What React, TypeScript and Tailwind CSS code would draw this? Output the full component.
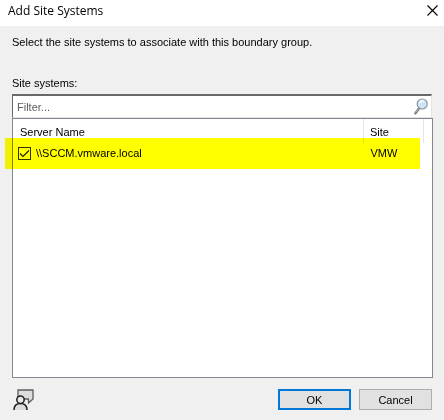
import { useState } from "react";

const servers = [{ name: "\\\\SCCM.vmware.local", site: "VMW" }];

const CloseIcon = () => (
  <svg width="11" height="11" viewBox="0 0 11 11" fill="none" stroke="black">
    <path d="M0.5 0.5 L10.5 10.5 M10.5 0.5 L0.5 10.5" strokeWidth="1.1" />
  </svg>
);

const SearchIcon = () => (
  <svg width="16" height="17" viewBox="0 0 16 17" fill="none">
    <path
      d="M6 10.5 L2.4 15.2"
      stroke="#77777b"
      strokeWidth="2.4"
      strokeLinecap="round"
    />
    <path d="M5.7 10.8 L2.6 14.6" stroke="#c9c9cc" strokeWidth="0.8" />
    <circle cx="9.2" cy="6" r="5" fill="#cfe6fa" stroke="#8e959e" strokeWidth="1.2" />
    <path
      d="M5.7 5.8 C5.9 3.6 7.4 2.4 9.4 2.3 C10.8 2.3 11.8 2.9 12.4 3.8 C10 3.8 8 4.4 5.7 5.8 Z"
      fill="#f5fbff"
    />
  </svg>
);

const FeedbackIcon = () => (
  <svg width="22" height="22" viewBox="0 0 22 22" fill="none">
    <path
      d="M5 1 H20 V10 L15.5 14 V10 H5 Z"
      fill="#dcdcdc"
      stroke="#5c5c5c"
      strokeWidth="1.3"
    />
    <path
      d="M1 21 C1 16.5 3.8 14.5 7.5 14.5 C11.2 14.5 14 16.5 14 21 Z"
      fill="#dcdcdc"
    />
    <path
      d="M1 21 C1 16.5 3.8 14.5 7.5 14.5 C11.2 14.5 14 16.5 14 21"
      stroke="#1f1f1f"
      strokeWidth="1.5"
    />
    <circle cx="7.5" cy="10.7" r="3.7" fill="#e8e8e8" stroke="#1f1f1f" strokeWidth="1.5" />
  </svg>
);

const App = () => {
  const [filter, setFilter] = useState("");
  const [checked, setChecked] = useState(true);

  return (
    <div className="min-h-screen bg-[#f0f0f0] font-['Liberation_Sans',Arial,sans-serif] text-[11px] leading-4 text-black">
      <header className="flex h-[26px] items-center justify-between bg-white pr-[6px] pb-[5px] pl-2">
        <h1 className="font-['Open_Sans','Segoe_UI',sans-serif] text-[12px]">
          Add Site Systems
        </h1>
        <button type="button" aria-label="Close">
          <CloseIcon />
        </button>
      </header>

      <main className="px-3 pt-2">
        <p>Select the site systems to associate with this boundary group.</p>
        <label htmlFor="filter" className="mt-[25px] block">
          Site systems:
        </label>

        <div className="mt-[3px] flex h-6 items-center border border-t-2 border-t-[#696969] border-r-[#e3e3e3] border-b-[#e3e3e3] border-l-[#696969] bg-white pr-[2px] pl-1">
          <input
            id="filter"
            type="text"
            placeholder="Filter..."
            value={filter}
            onChange={(e) => setFilter(e.target.value)}
            className="min-w-0 flex-1 outline-none placeholder:text-[#5f5f5f]"
          />
          <SearchIcon />
        </div>

        <div className="-mr-px h-[260px] border border-[#828790] bg-white pr-2">
          <table className="w-full table-fixed border-collapse text-left">
            <thead>
              <tr className="h-6">
                <th className="border-r border-[#e5e5e5] pt-[2px] pl-[7px] font-normal">
                  Server Name
                </th>
                <th className="w-[60px] border-r border-[#e5e5e5] pt-[2px] pl-[6px] font-normal">
                  Site
                </th>
              </tr>
            </thead>
            <tbody>
              {servers.map((server) => (
                <tr key={server.name} className="relative h-5">
                  <td className="pl-[5px]">
                    <label className="flex items-center gap-[5px]">
                      <span className="grid size-[13px] place-items-center">
                        <input
                          type="checkbox"
                          checked={checked}
                          onChange={(e) => setChecked(e.target.checked)}
                          className="col-start-1 row-start-1 size-[13px] appearance-none border border-[#333333] bg-white"
                        />
                        {checked && (
                          <svg
                            width="11"
                            height="11"
                            viewBox="0 0 11 11"
                            fill="none"
                            className="pointer-events-none col-start-1 row-start-1"
                          >
                            <path d="M1 5.5 L4 8.5 L10 2.5" stroke="#222222" strokeWidth="1.2" />
                          </svg>
                        )}
                      </span>
                      {server.name}
                    </label>
                  </td>
                  <td className="pl-[7px]">
                    {server.site}
                    <span className="pointer-events-none absolute -top-[5px] right-1 -bottom-[6px] -left-2 bg-[#ffff00] mix-blend-multiply" />
                  </td>
                </tr>
              ))}
            </tbody>
          </table>
        </div>

        <footer className="mt-[11px] flex items-start justify-between pl-px">
          <button type="button" aria-label="Feedback">
            <FeedbackIcon />
          </button>
          <div className="flex gap-2">
            <button
              type="button"
              className="h-[21px] w-[73px] border-2 border-[#0078d7] bg-[#e1e1e1]"
            >
              OK
            </button>
            <button
              type="button"
              className="h-[21px] w-[73px] border border-[#adadad] bg-[#e1e1e1]"
            >
              Cancel
            </button>
          </div>
        </footer>
      </main>
    </div>
  );
};

export default App;
